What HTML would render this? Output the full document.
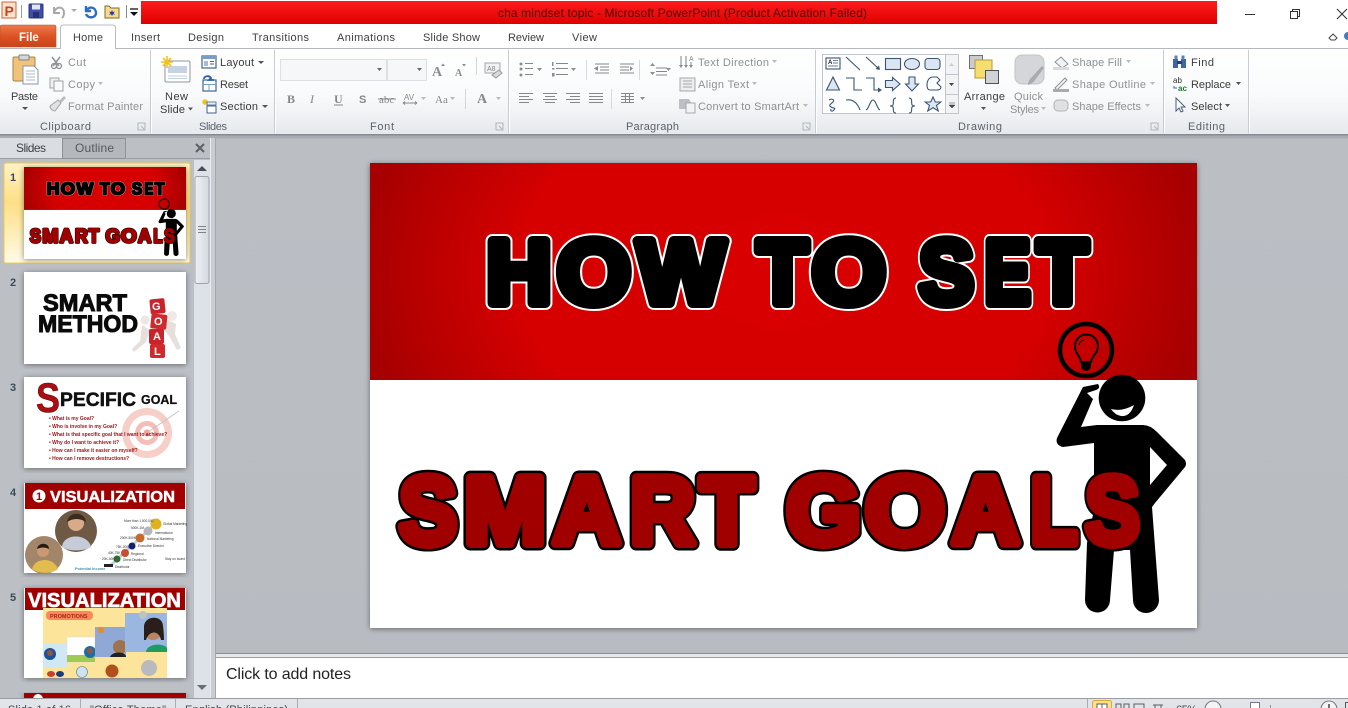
<!DOCTYPE html>
<html lang="en"><head><meta charset="utf-8"><title>cha mindset topic - Microsoft PowerPoint</title>
<style>
html,body{margin:0;padding:0;width:1348px;height:708px;overflow:hidden;background:#b9bdc2}
svg{position:absolute;left:0;top:0;display:block}
text{font-family:"Liberation Sans",sans-serif}
.r{font-size:11px;fill:#3c3c3c}
.d{font-size:11px;fill:#8e9094}
.g{font-size:11px;fill:#5d6269}
.tab{font-size:11px;fill:#3f4042}
.ic{fill:none;stroke:#3a5472;stroke-width:1.1}
.sf{fill:#dbe6f2;stroke:#3a5472;stroke-width:1.1}
.b{font-weight:bold}
.h1 text{font-family:"Liberation Sans",sans-serif;font-weight:bold;font-size:90px;stroke-linejoin:round}
.h2 text{font-family:"Liberation Sans",sans-serif;font-weight:bold;font-size:96px;stroke-linejoin:round}
.wo text{fill:#fff;stroke:#fff;stroke-width:14px}
.bk text{fill:#000;stroke:#000;stroke-width:10px}
.bo text{fill:#000;stroke:#000;stroke-width:14px}
.rd text{fill:#a00000;stroke:#a00000;stroke-width:9px}
</style></head><body>
<svg width="1348" height="708" viewBox="0 0 1348 708" xmlns="http://www.w3.org/2000/svg">
<defs>
<linearGradient id="red" x1="0" y1="0" x2="0" y2="1"><stop offset="0" stop-color="#ff1c1c"/><stop offset="1" stop-color="#de0000"/></linearGradient>
<linearGradient id="file" x1="0" y1="0" x2="0" y2="1"><stop offset="0" stop-color="#ee7a4c"/><stop offset=".5" stop-color="#dc5425"/><stop offset="1" stop-color="#c9431a"/></linearGradient>
<linearGradient id="rib" x1="0" y1="0" x2="0" y2="1"><stop offset="0" stop-color="#ffffff"/><stop offset=".55" stop-color="#f9fafb"/><stop offset="1" stop-color="#e6e9ed"/></linearGradient>
<linearGradient id="sel" x1="0" y1="0" x2="0" y2="1"><stop offset="0" stop-color="#fff3c4"/><stop offset=".4" stop-color="#fddf86"/><stop offset="1" stop-color="#fffbe8"/></linearGradient>
<linearGradient id="sb" x1="0" y1="0" x2="1" y2="0"><stop offset="0" stop-color="#eef0f3"/><stop offset="1" stop-color="#d4d9e0"/></linearGradient>
<linearGradient id="main" x1="0" y1="0" x2="0" y2="1"><stop offset="0" stop-color="#bcc0c5"/><stop offset="1" stop-color="#b8bcc1"/></linearGradient>
<radialGradient id="slidered" gradientUnits="userSpaceOnUse" cx="783" cy="272" r="425" gradientTransform="translate(0 81.6) scale(1 .7)"><stop offset="0" stop-color="#d80000"/><stop offset=".62" stop-color="#d60000"/><stop offset="1" stop-color="#a60000"/></radialGradient>
<filter id="sh" x="-5%" y="-5%" width="110%" height="110%"><feDropShadow dx="0" dy="1" stdDeviation="3" flood-color="#000" flood-opacity=".45"/></filter>
</defs>

<!-- workspace -->
<rect width="1348" height="708" fill="url(#main)"/>

<!-- title bar -->
<rect x="0" y="0" width="1348" height="49" fill="#fff"/>
<rect x="2" y="2" width="14" height="16" fill="#fbe3d0" stroke="#d2622f"/>
<text x="4.500" y="16" font-size="14" font-weight="bold" fill="#c8431a">P</text>
<path d="M21.500 5V18" stroke="#9a9a9a"/>
<rect x="29" y="4" width="14" height="14" rx="1" fill="#3f4fae" stroke="#2b3577"/><rect x="32" y="4.500" width="8" height="5" fill="#dfe6f4"/><rect x="33" y="12" width="6" height="6" fill="#2a2f70"/>
<path d="M54 7v6h6M54 12c2-6 10-6 10 1 0 2-1 4-2 5" fill="none" stroke="#a8a8a8" stroke-width="2"/>
<path d="M71 9l3 3 3-3z" fill="#aaa"/>
<path d="M86 6v5h5M87 10c2-4 9-3 9 3 0 5-8 6-10 1" fill="none" stroke="#2d6cc0" stroke-width="2.400"/>
<path d="M105 6h4l2 2h8v10h-14z" fill="#f6dc87" stroke="#7d6a30"/><path d="M112 10l.8 2 2.200-.5-1.500 1.600 1.500 1.700-2.200-.5-.8 2-.8-2-2.200.5 1.500-1.700-1.500-1.600 2.200.5z" fill="#2238a8"/>
<path d="M126.500 5V18" stroke="#8a8a8a"/>
<path d="M130 9h8" stroke="#111" stroke-width="1.300"/><path d="M130 12h8l-4 4z" fill="#111"/>
<rect x="141" y="1" width="1076" height="23" fill="url(#red)"/>
<text x="498" y="17" font-size="12" fill="#500808" textLength="369" lengthAdjust="spacing">cha mindset topic - Microsoft PowerPoint (Product Activation Failed)</text>
<path d="M1245 14.500h10" stroke="#333"/>
<path d="M1290.500 11.500h7v7h-7zM1292.500 11.500v-2h7v7h-2" fill="none" stroke="#333"/>
<path d="M1337 9l10 10M1347 9l-10 10" stroke="#333" stroke-width="1.100"/>
<path d="M1329 38l4-4 4 4-2 2h-4z" fill="none" stroke="#444"/>
<circle cx="1348" cy="36" r="4" fill="#3e7cc9"/>

<!-- tabs -->
<path d="M0 47V27q0-2 2-2h52q2 0 2 2v20z" fill="url(#file)" stroke="#b4532b" stroke-width=".6"/>
<text x="19" y="41" font-size="11.500" font-weight="bold" fill="#fff">File</text>
<rect x="0" y="48" width="1348" height="1" fill="#b5b9be"/>
<path d="M60.500 49V28q0-3 3-3h49q3 0 3 3v21" fill="#fff" stroke="#b8bcc2"/>
<rect x="61" y="48" width="54" height="2" fill="#fff"/>
<text class="tab" x="73" y="41" textLength="30">Home</text>
<text class="tab" x="131" y="41" textLength="29">Insert</text>
<text class="tab" x="188" y="41" textLength="36">Design</text>
<text class="tab" x="252" y="41" textLength="57">Transitions</text>
<text class="tab" x="337" y="41" textLength="58">Animations</text>
<text class="tab" x="423" y="41" textLength="57">Slide Show</text>
<text class="tab" x="508" y="41" textLength="36">Review</text>
<text class="tab" x="572" y="41" textLength="25">View</text>

<!-- ribbon -->
<rect x="0" y="49" width="1348" height="85" fill="url(#rib)"/>
<rect x="0" y="134" width="1348" height="1.500" fill="#888c92"/>
<rect x="0" y="135.500" width="1348" height="3" fill="#a9adb3"/>
<g stroke="#c8ccd2">
<path d="M150.500 50V133M274.500 50V133M508.500 50V133M815.500 50V133M1163.500 50V133M1248.500 50V133"/>
</g>
<g stroke="#fff"><path d="M151.500 50V133M275.500 50V133M509.500 50V133M816.500 50V133M1164.500 50V133M1249.500 50V133"/></g>
<text class="g" x="40" y="130" textLength="51">Clipboard</text>
<text class="g" x="199" y="130" textLength="28">Slides</text>
<text class="g" x="370" y="130" textLength="24">Font</text>
<text class="g" x="626" y="130" textLength="53">Paragraph</text>
<text class="g" x="958" y="130" textLength="44">Drawing</text>
<text class="g" x="1188" y="130" textLength="37">Editing</text>
<g fill="none" stroke="#a2a5aa" stroke-width=".8"><path d="M138 123h7v7h-7zM141 126l3 3"/><path d="M496 123h7v7h-7zM499 126l3 3"/><path d="M803 123h7v7h-7zM806 126l3 3"/><path d="M1151 123h7v7h-7zM1154 126l3 3"/></g>

<!-- clipboard -->
<rect x="13" y="57" width="22" height="24" rx="1.500" fill="#f0c27a" stroke="#a68348"/>
<rect x="19" y="55" width="10" height="5" rx="1" fill="#d3d7dc" stroke="#7f7f7f"/>
<path d="M23 66h11l4 4v14H23z" fill="#fff" stroke="#8a95a5"/>
<path d="M26 71h9M26 74h9M26 77h9M26 80h9" stroke="#b0b8c5"/>
<text class="r" x="11" y="100" textLength="27">Paste</text>
<path d="M22 107h6l-3 3z" fill="#555"/>
<path d="M52 57l7 9M60 57l-7 9" stroke="#8d9095" stroke-width="1.500"/><circle cx="54" cy="66" r="2.500" fill="none" stroke="#8d9095" stroke-width="1.300"/><circle cx="59" cy="66" r="2.500" fill="none" stroke="#8d9095" stroke-width="1.300"/>
<text class="d" x="68" y="66" textLength="18">Cut</text>
<rect x="50" y="78" width="9" height="10" fill="#eef0f2" stroke="#a0a3a8"/><rect x="54" y="81" width="9" height="10" fill="#fafafa" stroke="#a0a3a8"/>
<text class="d" x="68" y="88" textLength="27">Copy</text><path d="M98 82h5l-2.500 3z" fill="#bbb"/>
<path d="M50 106l8-6 3 3-6 8c-2 0-5-2-5-5z" fill="#dfe1e4" stroke="#a0a3a8"/><path d="M59 101l5-5 2 2-5 5z" fill="#b9bcc0"/>
<text class="d" x="68" y="110" textLength="75">Format Painter</text>

<!-- slides -->
<rect x="165" y="61" width="25" height="21" rx="1.500" fill="#fff" stroke="#8c96a3"/>
<rect x="168" y="66" width="19" height="7" fill="#c7d2e3"/><path d="M168 76h19M168 78.500h19" stroke="#c6cfdc"/>
<path d="M167 56v12M161 62h12M163 58l8 8M171 58l-8 8" stroke="#f2c11b" stroke-width="1.600"/>
<text class="r" x="165" y="100" textLength="23">New</text>
<text class="r" x="160" y="113" textLength="25">Slide</text><path d="M188 107.500h5l-2.500 3z" fill="#555"/>
<rect x="202" y="56" width="14" height="12" fill="#fff" stroke="#3f6394" stroke-width="1.200"/><rect x="202" y="56" width="14" height="3" fill="#7b9ec8"/><rect x="204" y="61" width="4" height="5" fill="#a8bcd6"/><path d="M210 61.500h4M210 64h4" stroke="#3f6394"/>
<text class="r" x="220" y="66" textLength="34">Layout</text><path d="M258 61h6l-3 3z" fill="#555"/>
<rect x="203" y="80" width="13" height="11" fill="#fff" stroke="#3f6394" stroke-width="1.200"/><path d="M203 84.500h13M209 84.500V91" stroke="#7b9ec8"/><path d="M204 79c0-3 5-4 7-1l-2 2h5" fill="none" stroke="#2a5ea8" stroke-width="1.800"/>
<text class="r" x="220" y="88" textLength="28">Reset</text>
<path d="M205 99v6M202 102h6M203 100l4 4M207 100l-4 4" stroke="#f2c11b" stroke-width="1.400"/><rect x="207" y="102" width="9" height="3" fill="#e9edf3" stroke="#3f6394" stroke-width=".8"/><rect x="207" y="106" width="9" height="7" fill="#fff" stroke="#3f6394" stroke-width="1"/>
<text class="r" x="220" y="110" textLength="38">Section</text><path d="M262 105h6l-3 3z" fill="#555"/>

<!-- font -->
<rect x="280.500" y="59.500" width="106" height="21" fill="#f6f7f9" stroke="#dcdfe4"/>
<rect x="387.500" y="59.500" width="39" height="21" fill="#f6f7f9" stroke="#dcdfe4"/>
<path d="M377 68h5l-2.500 3zM417 68h5l-2.500 3z" fill="#666"/>
<text x="432" y="76" font-size="14" font-weight="bold" fill="#8a8d91" style="font-family:'Liberation Serif',serif">A</text><path d="M441 66l2-2.500 2 2.500z" fill="#8a8d91"/>
<text x="455" y="76" font-size="10" font-weight="bold" fill="#8a8d91" style="font-family:'Liberation Serif',serif">A</text><path d="M462 64l2 2.500 2-2.500z" fill="#8a8d91"/>
<path d="M476.500 57v18" stroke="#d2d5da"/>
<rect x="485" y="63" width="15" height="10" fill="#f0f1f3" stroke="#a5a8ad"/><text x="487" y="71" font-size="7" fill="#888">A8</text><path d="M492 75l7-5 3 3-6 5z" fill="#d8dadd" stroke="#999"/>
<text x="287" y="103" font-size="12" font-weight="bold" fill="#85878b" style="font-family:'Liberation Serif',serif">B</text>
<text x="310" y="103" font-size="12" font-style="italic" fill="#85878b" style="font-family:'Liberation Serif',serif">I</text>
<text x="334" y="103" font-size="12" font-weight="bold" fill="#85878b" style="font-family:'Liberation Serif',serif">U</text><path d="M334 105h9" stroke="#85878b"/>
<text x="359" y="103" font-size="11" font-weight="bold" fill="#85878b">S</text>
<text x="379" y="103" font-size="11" fill="#85878b" style="font-family:'Liberation Serif',serif">abc</text><path d="M378 99h18" stroke="#85878b"/>
<text x="404" y="100" font-size="8" fill="#85878b">AV</text><path d="M403 103h14M403 103l2-1.500M403 103l2 1.500M417 103l-2-1.500M417 103l-2 1.500" stroke="#85878b" fill="none"/><path d="M421 97h5l-2.500 3z" fill="#bbb"/>
<text x="435" y="103" font-size="11" fill="#85878b" style="font-family:'Liberation Serif',serif">Aa</text><path d="M450 97h5l-2.500 3z" fill="#bbb"/>
<path d="M465.500 89v20" stroke="#d2d5da"/>
<text x="477" y="103" font-size="14" font-weight="bold" fill="#85878b" style="font-family:'Liberation Serif',serif">A</text><path d="M496 97h5l-2.500 3z" fill="#bbb"/>

<!-- paragraph -->
<g stroke="#85878b" fill="none">
<path d="M525 63.500h8M525 68.500h8M525 74.500h8M556 63.500h12M556 68.500h12M556 74.500h12"/>
<path d="M595 64h14M600 67h9M600 70h9M595 73h14M620 64h14M620 67h9M620 70h9M620 73h14"/>
<path d="M656 68h11M656 71.500h11M656 75h11"/>
<path d="M519 93.500h14M519 96.500h10M519 99.500h14M519 102.500h10M543 93.500h14M545 96.500h10M543 99.500h14M545 102.500h10M566 93.500h14M570 96.500h10M566 99.500h14M570 102.500h10M589 93.500h14M589 96.500h14M589 99.500h14M589 102.500h14"/>
<path d="M621 93.500h13M621 96.500h13M621 99.500h13M621 102.500h13M625.500 93v10M629.500 93v10"/>
</g>
<g fill="#8a8c90"><circle cx="521" cy="64" r="1.500"/><circle cx="521" cy="69" r="1.500"/><circle cx="521" cy="75" r="1.500"/>
<path d="M552 62h1.500v4h-1.500zM552 68h2.500v1.500h-2.500zM552 73h2.500v3.500h-2.500z"/>
<path d="M537 68h5l-2.500 3zM571 68h5l-2.500 3z"/>
<path d="M594 68.500l4-2.500v5zM633 68.500l-3-2.500v5zM650 66l2.500-3 2.500 3zM650 72l2.500 3 2.500-3z"/>
<path d="M666 68h5l-2.500 3zM640 97h5l-2.500 3z"/></g>
<path d="M586.500 60v20M639.500 60v20M611.500 89v20" stroke="#d6d9dd"/>
<path d="M681 56v11M686 56v11M691 62v5" stroke="#7f8285"/><text x="689" y="61" font-size="7" fill="#8a8c90">A</text><path d="M679 65l2 3 2-3M684 65l2 3 2-3M689 65l2 3 2-3" fill="#8a8c90"/>
<text class="d" x="698" y="66" textLength="71">Text Direction</text><path d="M772 60h5l-2.500 3z" fill="#bbb"/>
<rect x="680" y="78" width="15" height="13" fill="#eceef0" stroke="#a5a8ad"/><path d="M683 81h9M683 84h9M683 87h9" stroke="#a5a8ad"/>
<text class="d" x="698" y="88" textLength="51">Align Text</text><path d="M752 82h5l-2.500 3z" fill="#bbb"/>
<path d="M679 99h10l3 5-3 5h-10z" fill="#bcbfc4"/><rect x="686" y="103" width="9" height="10" fill="#f2f3f5" stroke="#a5a8ad"/>
<text class="d" x="698" y="110" textLength="101">Convert to SmartArt</text><path d="M803 104h5l-2.500 3z" fill="#bbb"/>

<!-- shapes -->
<rect x="822.500" y="54.500" width="123" height="59" fill="#fff" stroke="#c2c6cc"/>
<rect x="945.500" y="54.500" width="13" height="59" fill="#f1f3f5" stroke="#c2c6cc"/>
<path d="M945.500 74.500h13M945.500 94.500h13" stroke="#c2c6cc"/>
<path d="M949 66l2.500-3 2.500 3z" fill="#ccc"/><path d="M949 83h5l-2.500 3z" fill="#444"/><path d="M949 103h6M949 105h6l-3 3z" fill="#444" stroke="#444" stroke-width=".5"/>
<g>
<rect x="826" y="58" width="14" height="11" class="sf" style="fill:#fff"/><text x="828" y="64" font-size="6" font-weight="bold" fill="#223">A</text><path d="M833 60.500h5M833 63h5M828 66h10" stroke="#3a5472" stroke-width=".8"/>
<path class="ic" d="M846 57l14 13"/>
<path class="ic" d="M866 57l13 12"/><path d="M880 70l-4.500-1 3.500-3.500z" fill="#3a5472"/>
<rect x="885.500" y="58.500" width="15" height="11" class="sf"/>
<ellipse cx="912" cy="64" rx="7.500" ry="5.500" class="sf"/>
<rect x="925" y="58.500" width="15" height="11" rx="3" class="sf"/>
<path class="sf" d="M833 77l-6.500 13h13z"/>
<path class="ic" d="M846 78h8v12h8"/>
<path class="ic" d="M866 78h8v12h6"/><path d="M882 90l-4-2.500v5z" fill="#3a5472"/>
<path class="sf" d="M885.500 80.500h7v-3l7.500 6.500-7.500 6.500v-3h-7z"/>
<path class="sf" d="M909 77h6v7h3.500l-6.500 7-6.500-7h3.500z"/>
<path class="sf" style="fill:#fff" d="M927 85c0-4 2-8 6-8h4l3 3-3 3 4 4c0 2-2 3-4 3h-7c-2 0-3-2-3-5z"/>
<path class="ic" d="M829 100c3-2 6 0 4 2s-5 3-2 5 5 0 3 3c-2 2-4 1-3-1"/>
<path class="ic" d="M846 100c6-1 11 2 14 10"/>
<path class="ic" d="M866 110c3-1 4-10 7-10s4 9 7 10"/>
<path class="ic" d="M896 98c-4 0-2 5-3 7-1 1-2 1-3 1 1 0 2 0 3 1 1 2-1 6 3 6"/>
<path class="ic" d="M909 98c4 0 2 5 3 7 1 1 2 1 3 1-1 0-2 0-3 1-1 2 1 6-3 6"/>
<path class="sf" d="M933 97l2.300 5h5.500l-4.300 3.500 1.800 5.500-5.300-3.300-5.300 3.300 1.800-5.500-4.300-3.500h5.500z"/>
</g>

<!-- drawing right -->
<rect x="969.500" y="55.500" width="13" height="13" fill="#c9ccd1" stroke="#6e7074"/>
<rect x="975" y="60" width="17" height="18" fill="#f6dd6f" stroke="#b49b3a"/>
<rect x="985.500" y="70.500" width="13" height="13" fill="#cfd2d6" stroke="#4e5054"/>
<text class="r" x="964" y="100" textLength="41">Arrange</text><path d="M981 107h5l-2.500 3z" fill="#555"/>
<rect x="1015" y="55" width="29" height="29" rx="7" fill="#d4d6d9" stroke="#c2c4c8"/>
<path d="M1044 68l-9 12c-2 3-4 4-7 5 0-3 1-5 3-7l11-12z" fill="#a9abaf"/>
<text class="d" x="1014" y="100" textLength="29">Quick</text>
<text class="d" x="1010" y="113" textLength="29">Styles</text><path d="M1041 107h5l-2.500 3z" fill="#bbb"/>
<path d="M1055 62l6-5 7 7-6 4z" fill="#f2f3f4" stroke="#8d9095"/><rect x="1053" y="67" width="16" height="3" fill="#d8dade"/>
<text class="d" x="1072" y="66" textLength="50">Shape Fill</text><path d="M1126 60h5l-2.500 3z" fill="#bbb"/>
<path d="M1055 88l10-10 2 2-10 10z" fill="#f4f5f6" stroke="#8d9095"/><rect x="1053" y="89" width="16" height="3" fill="#a9abaf"/>
<text class="d" x="1072" y="88" textLength="74">Shape Outline</text><path d="M1150 82h5l-2.500 3z" fill="#bbb"/>
<rect x="1054" y="100" width="14" height="11" rx="4" fill="#dfe0e3" stroke="#b2b4b8"/>
<text class="d" x="1072" y="110" textLength="69">Shape Effects</text><path d="M1145 104h5l-2.500 3z" fill="#bbb"/>

<!-- editing -->
<rect x="1173" y="59" width="5" height="9" fill="#3e65a8"/><rect x="1181" y="59" width="5" height="9" fill="#3e65a8"/><rect x="1177" y="61" width="5" height="3" fill="#243f72"/><rect x="1174.500" y="55.500" width="3" height="4" fill="#5b80be"/><rect x="1181.500" y="55.500" width="3" height="4" fill="#5b80be"/>
<text class="r" x="1191" y="66" textLength="23">Find</text>
<text x="1173" y="83" font-size="8" fill="#333">ab</text><text x="1178" y="91" font-size="8" font-weight="bold" fill="#1c7a2e">ac</text><path d="M1174 86v2h3" fill="none" stroke="#3e65a8"/>
<text class="r" x="1191" y="88" textLength="40">Replace</text><path d="M1236 82h5l-2.500 3z" fill="#555"/>
<path d="M1176 98v13l3-3 2 4 2-1-2-4h4z" fill="#fff" stroke="#4a5e80"/>
<text class="r" x="1191" y="110" textLength="31">Select</text><path d="M1225 104h5l-2.500 3z" fill="#555"/>

<!-- left panel -->
<rect x="0" y="138" width="210" height="560" fill="#bcc0c5"/>
<rect x="0" y="138" width="62" height="21" fill="#dadde1"/>
<text x="16" y="152" font-size="12" fill="#404347" textLength="30">Slides</text>
<rect x="62.500" y="138.500" width="63" height="20" fill="#b4b8bd" stroke="#8e9298"/>
<text x="75" y="152" font-size="12" fill="#55585d" textLength="39">Outline</text>
<path d="M0 158.500h62M125 158.500h85" stroke="#9a9ea4"/>
<path d="M196 144l8 8M204 144l-8 8" stroke="#5d6166" stroke-width="2"/>
<rect x="210" y="138" width="1" height="560" fill="#e9ebee"/>
<rect x="211" y="138" width="4" height="560" fill="#c9cdd2"/>
<rect x="215" y="138" width="1" height="560" fill="#a4a8ae"/>
<rect x="194" y="160" width="16" height="538" fill="#dde2e9"/>
<path d="M197 171l5-5 5 5z" fill="#4a4d52"/>
<rect x="195" y="176.500" width="14" height="107" rx="2" fill="url(#sb)" stroke="#9ea3aa"/>
<path d="M198 226.500h8M198 229.500h8M198 232.500h8" stroke="#7f8388"/>
<path d="M197 685l5 5 5-5z" fill="#6a6d72"/>

<rect x="4" y="163" width="186" height="100" rx="2" fill="url(#sel)" stroke="#f2c94c"/>
<g font-size="11" font-weight="bold" fill="#3e4a5a">
<text x="10" y="181">1</text><text x="10" y="286">2</text><text x="10" y="391">3</text><text x="10" y="496">4</text><text x="10" y="601">5</text>
</g>

<!-- thumb 1 -->
<rect x="24" y="167" width="162" height="92" fill="#fff" filter="url(#sh)"/>
<svg x="24" y="167" width="162" height="92" viewBox="370 163 827 465" preserveAspectRatio="none">
<rect x="370" y="163" width="827" height="217" fill="url(#slidered)"/>
<g class="h1">
<g class="wo"><text x="486.500" y="303" textLength="65" lengthAdjust="spacingAndGlyphs" style="fill:#bbb;stroke:#bbb">H</text><text x="557.300" y="303" textLength="73.300" lengthAdjust="spacingAndGlyphs" style="fill:#bbb;stroke:#bbb">O</text><text x="637.400" y="303" textLength="87.300" lengthAdjust="spacingAndGlyphs" style="fill:#bbb;stroke:#bbb">W</text><text x="757.200" y="303" textLength="50.500" lengthAdjust="spacingAndGlyphs" style="fill:#bbb;stroke:#bbb">T</text><text x="812.300" y="303" textLength="73.300" lengthAdjust="spacingAndGlyphs" style="fill:#bbb;stroke:#bbb">O</text><text x="919.300" y="303" textLength="54.400" lengthAdjust="spacingAndGlyphs" style="fill:#bbb;stroke:#bbb">S</text><text x="984.600" y="303" textLength="45.900" lengthAdjust="spacingAndGlyphs" style="fill:#bbb;stroke:#bbb">E</text><text x="1037.200" y="303" textLength="50.500" lengthAdjust="spacingAndGlyphs" style="fill:#bbb;stroke:#bbb">T</text></g>
<g class="bk"><text x="486.500" y="303" textLength="65" lengthAdjust="spacingAndGlyphs">H</text><text x="557.300" y="303" textLength="73.300" lengthAdjust="spacingAndGlyphs">O</text><text x="637.400" y="303" textLength="87.300" lengthAdjust="spacingAndGlyphs">W</text><text x="757.200" y="303" textLength="50.500" lengthAdjust="spacingAndGlyphs">T</text><text x="812.300" y="303" textLength="73.300" lengthAdjust="spacingAndGlyphs">O</text><text x="919.300" y="303" textLength="54.400" lengthAdjust="spacingAndGlyphs">S</text><text x="984.600" y="303" textLength="45.900" lengthAdjust="spacingAndGlyphs">E</text><text x="1037.200" y="303" textLength="50.500" lengthAdjust="spacingAndGlyphs">T</text></g>
</g>
<path d="M1083 387L1098 384Q1101 388 1096 390L1087 393L1093 399L1081 427L1097 425H1143Q1150 425 1157 432L1185 460Q1187 464 1185 467L1155 503L1152 507L1159 600A13 13 0 0 1 1133 600L1130 550H1114L1110 600A12.500 12.500 0 0 1 1085 600L1087 543L1094 510V443L1063 447Q1055 445 1057 438ZM1150 447V485L1167 465Z" fill-rule="evenodd"/>
<circle cx="1122" cy="398" r="23.300"/><circle cx="1086" cy="350" r="26" fill="none" stroke="#000" stroke-width="5"/>
<g class="h2">
<g class="bo"><text x="399.100" y="543.500" textLength="57.800" lengthAdjust="spacingAndGlyphs">S</text><text x="464" y="543.500" textLength="82" lengthAdjust="spacingAndGlyphs">M</text><text x="552.700" y="543.500" textLength="67.700" lengthAdjust="spacingAndGlyphs">A</text><text x="630.100" y="543.500" textLength="64.800" lengthAdjust="spacingAndGlyphs">R</text><text x="700.100" y="543.500" textLength="53.800" lengthAdjust="spacingAndGlyphs">T</text><text x="786.300" y="543.500" textLength="74.400" lengthAdjust="spacingAndGlyphs">G</text><text x="865" y="543.500" textLength="80" lengthAdjust="spacingAndGlyphs">O</text><text x="951.700" y="543.500" textLength="67.700" lengthAdjust="spacingAndGlyphs">A</text><text x="1030.500" y="543.500" textLength="47" lengthAdjust="spacingAndGlyphs">L</text><text x="1085.300" y="543.500" textLength="54.400" lengthAdjust="spacingAndGlyphs">S</text></g>
<g class="rd"><text x="399.100" y="543.500" textLength="57.800" lengthAdjust="spacingAndGlyphs">S</text><text x="464" y="543.500" textLength="82" lengthAdjust="spacingAndGlyphs">M</text><text x="552.700" y="543.500" textLength="67.700" lengthAdjust="spacingAndGlyphs">A</text><text x="630.100" y="543.500" textLength="64.800" lengthAdjust="spacingAndGlyphs">R</text><text x="700.100" y="543.500" textLength="53.800" lengthAdjust="spacingAndGlyphs">T</text><text x="786.300" y="543.500" textLength="74.400" lengthAdjust="spacingAndGlyphs">G</text><text x="865" y="543.500" textLength="80" lengthAdjust="spacingAndGlyphs">O</text><text x="951.700" y="543.500" textLength="67.700" lengthAdjust="spacingAndGlyphs">A</text><text x="1030.500" y="543.500" textLength="47" lengthAdjust="spacingAndGlyphs">L</text><text x="1085.300" y="543.500" textLength="54.400" lengthAdjust="spacingAndGlyphs">S</text></g>
</g>
</svg>

<!-- thumb 2 -->
<rect x="24" y="272" width="162" height="92" fill="#fff" filter="url(#sh)"/>
<g font-weight="bold" fill="#0a0a0a" stroke="#0a0a0a" stroke-width="1">
<text x="43" y="311" font-size="24" textLength="84" lengthAdjust="spacingAndGlyphs">SMART</text>
<text x="38" y="332" font-size="24" textLength="100" lengthAdjust="spacingAndGlyphs">METHOD</text></g>
<g>
<circle cx="172" cy="316" r="5" fill="#efe9e6"/><path d="M168 320l-4 10 5 6 8 14 4-2-6-14 1-10z" fill="#e6e0dd"/>
<circle cx="145" cy="320" r="4.500" fill="#ece7e4"/><path d="M142 325l8 5-4 12-12 10-2-3 8-8z" fill="#e6e0dd"/>
<rect x="150" y="299" width="15" height="15" rx="2" fill="#c9242b" transform="rotate(-6 155 306)"/><rect x="151" y="314" width="16" height="15" rx="2" fill="#d02a2f" transform="rotate(6 158 320)"/><rect x="149" y="329" width="15" height="15" rx="2" fill="#c9242b"/><rect x="150" y="344" width="15" height="14" rx="2" fill="#d02a2f"/>
<g font-size="11" font-weight="bold" fill="#fff"><text x="152" y="310">G</text><text x="154" y="325">O</text><text x="153" y="340">A</text><text x="154" y="355">L</text></g>
</g>

<!-- thumb 3 -->
<rect x="24" y="377" width="162" height="91" fill="#fff" filter="url(#sh)"/>
<circle cx="147" cy="433" r="25" fill="#f6cfc9"/><circle cx="147" cy="433" r="18" fill="#fff"/><circle cx="147" cy="433" r="12" fill="#f4bdb5"/><circle cx="147" cy="433" r="7" fill="#fff"/><circle cx="147" cy="433" r="3.500" fill="#efa69c"/>
<path d="M148 432l31-21" stroke="#c9c4c4"/>
<text x="36" y="412" font-size="42" font-weight="bold" fill="#a80e12" stroke="#6d0508" stroke-width=".6" textLength="24" lengthAdjust="spacingAndGlyphs">S</text>
<text x="60" y="406" font-size="19" font-weight="bold" fill="#111" stroke="#111" stroke-width=".5" textLength="76" lengthAdjust="spacingAndGlyphs">PECIFIC</text>
<text x="141" y="404" font-size="13" font-weight="bold" fill="#111" stroke="#111" stroke-width=".3" textLength="36" lengthAdjust="spacingAndGlyphs">GOAL</text>
<g font-size="5" font-weight="bold" fill="#a81419">
<text x="49" y="420">•  What is my Goal?</text>
<text x="49" y="428">•  Who is involve in my Goal?</text>
<text x="49" y="436">•  What is that specific goal that I want to achieve?</text>
<text x="49" y="444">•  Why do I want to achieve it?</text>
<text x="49" y="452">•  How can I make it easier on myself?</text>
<text x="49" y="460">•  How can I remove destructions?</text>
</g>

<!-- thumb 4 -->
<rect x="24" y="483" width="162" height="90" fill="#fff" filter="url(#sh)"/>
<rect x="25" y="483" width="160" height="26" fill="#a00000"/>
<circle cx="39" cy="496" r="6.500" fill="#fff"/><text x="36" y="500" font-size="11" font-weight="bold" fill="#a00000">1</text>
<text x="50" y="502" font-size="16" font-weight="bold" fill="#fff" stroke="#fff" stroke-width=".5" textLength="125" lengthAdjust="spacingAndGlyphs">VISUALIZATION</text>
<circle cx="76" cy="531" r="21" fill="#6e5a44"/><path d="M62 547c1-14 26-14 29 0-6 4-22 5-29 0z" fill="#c5cbd8"/><circle cx="76" cy="523" r="8" fill="#d9aa87"/><path d="M67 522c1-11 18-11 19 0-6-4-13-4-19 0z" fill="#3a2a20"/>
<circle cx="44" cy="555" r="19" fill="#a38669"/><path d="M32 569c3-12 22-12 26 0-6 5-20 5-26 0z" fill="#e2bd4d"/><circle cx="43" cy="551" r="6" fill="#c99a72"/><path d="M37 549c1-7 12-7 12 0-4-2-8-2-12 0z" fill="#241b15"/>
<path d="M110 566l45-42" stroke="#b7d5e3" stroke-width="3"/>
<circle cx="156" cy="524" r="5.500" fill="#e0b020"/><circle cx="148" cy="531" r="4.500" fill="#b5b7ba"/><circle cx="140" cy="538" r="4.500" fill="#c56a2a"/><circle cx="132" cy="546" r="3.500" fill="#14206c"/><circle cx="125" cy="553" r="4" fill="#c7512c"/><circle cx="117" cy="559" r="3.500" fill="#2f6a30"/><rect x="104" y="564" width="9" height="3" fill="#222"/>
<g font-size="3.200" fill="#333"><text x="124" y="522">More than 1,000,000</text><text x="163" y="525">Global Marketing</text><text x="131" y="529">500K-1M</text><text x="155" y="534">International</text><text x="120" y="539">200K-500K</text><text x="147" y="540">National Marketing</text><text x="116" y="548">75K-200K</text><text x="138" y="547">Executive Director</text><text x="108" y="554">40K-75K</text><text x="131" y="555">Regional</text><text x="102" y="560">20K-40K</text><text x="123" y="561">Direct Distributor</text><text x="115" y="568">Distributor</text><text x="165" y="560">Stay on board</text></g>
<text x="75" y="570" font-size="3.800" font-weight="bold" fill="#3b94b8">Potential Income</text>

<!-- thumb 5 -->
<rect x="24" y="588" width="162" height="90" fill="#fff" filter="url(#sh)"/>
<rect x="25" y="588" width="160" height="22" fill="#a00000"/>
<text x="28" y="607" font-size="20" font-weight="bold" fill="#fff" stroke="#fff" stroke-width=".7" textLength="153" lengthAdjust="spacingAndGlyphs">VISUALIZATION</text>
<rect x="43" y="608" width="124" height="70" fill="#fce49b"/>
<rect x="46" y="611" width="47" height="9" rx="4" fill="#f58a5a"/><text x="50" y="618" font-size="5.500" font-weight="bold" fill="#b02418">PROMOTIONS</text>
<rect x="43" y="643" width="24" height="24" fill="#cfe8f4"/><circle cx="50" cy="654" r="6" fill="#1f4f96"/><circle cx="50" cy="653" r="3" fill="#8a5a3e"/>
<rect x="67" y="637" width="28" height="25" fill="#fff" stroke="#ddd" stroke-width=".5"/><rect x="67" y="655" width="28" height="7" fill="#9ecb55"/><circle cx="90" cy="652" r="6" fill="#1f6aa8"/><circle cx="90" cy="651" r="3" fill="#8a5a3e"/>
<rect x="95" y="627" width="31" height="30" fill="#8fa8d6"/><circle cx="120" cy="647" r="7" fill="#a0734f"/><path d="M110 657c2-6 16-6 16 0z" fill="#222"/><circle cx="101" cy="630" r="3" fill="#e58b2a"/>
<rect x="125" y="613" width="42" height="39" fill="#9ab7e2"/><circle cx="153" cy="631" r="9" fill="#b88560"/><path d="M144 626c1-11 19-11 19 0 1 7 1 14 1 14h-3c-2-10-12-10-15 0h-2z" fill="#2a1e1a"/><path d="M146 652c1-9 18-9 21-4v4z" fill="#1f9c62"/><circle cx="143" cy="615" r="4" fill="#bfc2c5"/>
<circle cx="82" cy="672" r="5.500" fill="#cfe3ee" stroke="#4a86a8" stroke-width=".6"/><circle cx="112" cy="671" r="6.500" fill="#b1501a"/><circle cx="149" cy="668" r="8" fill="#b8babd"/><ellipse cx="51" cy="674" rx="4" ry="3" fill="#c7412c"/><ellipse cx="60" cy="674" rx="4" ry="3" fill="#1f3a78"/>

<!-- thumb 6 -->
<rect x="24" y="693" width="162" height="5" fill="#a00000" filter="url(#sh)"/><circle cx="38" cy="699" r="5" fill="#fff"/>

<!-- main slide -->
<rect x="370" y="163" width="827" height="465" fill="#fff" filter="url(#sh)"/>
<rect x="370" y="163" width="827" height="217" fill="url(#slidered)"/>
<g class="h1">
<g class="wo"><text x="486.500" y="303" textLength="65" lengthAdjust="spacingAndGlyphs">H</text><text x="557.300" y="303" textLength="73.300" lengthAdjust="spacingAndGlyphs">O</text><text x="637.400" y="303" textLength="87.300" lengthAdjust="spacingAndGlyphs">W</text><text x="757.200" y="303" textLength="50.500" lengthAdjust="spacingAndGlyphs">T</text><text x="812.300" y="303" textLength="73.300" lengthAdjust="spacingAndGlyphs">O</text><text x="919.300" y="303" textLength="54.400" lengthAdjust="spacingAndGlyphs">S</text><text x="984.600" y="303" textLength="45.900" lengthAdjust="spacingAndGlyphs">E</text><text x="1037.200" y="303" textLength="50.500" lengthAdjust="spacingAndGlyphs">T</text></g>
<g class="bk"><text x="486.500" y="303" textLength="65" lengthAdjust="spacingAndGlyphs">H</text><text x="557.300" y="303" textLength="73.300" lengthAdjust="spacingAndGlyphs">O</text><text x="637.400" y="303" textLength="87.300" lengthAdjust="spacingAndGlyphs">W</text><text x="757.200" y="303" textLength="50.500" lengthAdjust="spacingAndGlyphs">T</text><text x="812.300" y="303" textLength="73.300" lengthAdjust="spacingAndGlyphs">O</text><text x="919.300" y="303" textLength="54.400" lengthAdjust="spacingAndGlyphs">S</text><text x="984.600" y="303" textLength="45.900" lengthAdjust="spacingAndGlyphs">E</text><text x="1037.200" y="303" textLength="50.500" lengthAdjust="spacingAndGlyphs">T</text></g>
</g>
<!-- figure -->
<path fill="#000" fill-rule="evenodd" d="M1083 387L1098 384Q1101 388 1096 390L1087 393L1093 399L1081 427L1097 425H1143Q1150 425 1157 432L1185 460Q1187 464 1185 467L1155 503L1152 507L1159 600A13 13 0 0 1 1133 600L1130 550H1114L1110 600A12.500 12.500 0 0 1 1085 600L1087 543L1094 510V443L1063 447Q1055 445 1057 438ZM1150 447V485L1167 465Z"/>
<circle cx="1122" cy="398" r="23.300" fill="#000"/>
<path d="M1111 409Q1122 412 1134 405Q1130 417 1121 416Q1115 415 1111 409Z" fill="#fff"/>
<circle cx="1086" cy="350" r="26" fill="none" stroke="#000" stroke-width="4.500"/>
<path d="M1081 362C1080 355 1075 354 1075 346A11.500 11.500 0 0 1 1098 346C1098 354 1092 355 1091 362Z" fill="none" stroke="#000" stroke-width="2"/>
<path d="M1081 362h10v4a4 4 0 0 1-10 0z" fill="#000"/>
<path d="M1079 345a6 6 0 0 1 5-5" fill="none" stroke="#000" stroke-width="1"/>
<g class="h2">
<g class="bo"><text x="399.100" y="543.500" textLength="57.800" lengthAdjust="spacingAndGlyphs">S</text><text x="464" y="543.500" textLength="82" lengthAdjust="spacingAndGlyphs">M</text><text x="552.700" y="543.500" textLength="67.700" lengthAdjust="spacingAndGlyphs">A</text><text x="630.100" y="543.500" textLength="64.800" lengthAdjust="spacingAndGlyphs">R</text><text x="700.100" y="543.500" textLength="53.800" lengthAdjust="spacingAndGlyphs">T</text><text x="786.300" y="543.500" textLength="74.400" lengthAdjust="spacingAndGlyphs">G</text><text x="865" y="543.500" textLength="80" lengthAdjust="spacingAndGlyphs">O</text><text x="951.700" y="543.500" textLength="67.700" lengthAdjust="spacingAndGlyphs">A</text><text x="1030.500" y="543.500" textLength="47" lengthAdjust="spacingAndGlyphs">L</text><text x="1085.300" y="543.500" textLength="54.400" lengthAdjust="spacingAndGlyphs">S</text></g>
<g class="rd"><text x="399.100" y="543.500" textLength="57.800" lengthAdjust="spacingAndGlyphs">S</text><text x="464" y="543.500" textLength="82" lengthAdjust="spacingAndGlyphs">M</text><text x="552.700" y="543.500" textLength="67.700" lengthAdjust="spacingAndGlyphs">A</text><text x="630.100" y="543.500" textLength="64.800" lengthAdjust="spacingAndGlyphs">R</text><text x="700.100" y="543.500" textLength="53.800" lengthAdjust="spacingAndGlyphs">T</text><text x="786.300" y="543.500" textLength="74.400" lengthAdjust="spacingAndGlyphs">G</text><text x="865" y="543.500" textLength="80" lengthAdjust="spacingAndGlyphs">O</text><text x="951.700" y="543.500" textLength="67.700" lengthAdjust="spacingAndGlyphs">A</text><text x="1030.500" y="543.500" textLength="47" lengthAdjust="spacingAndGlyphs">L</text><text x="1085.300" y="543.500" textLength="54.400" lengthAdjust="spacingAndGlyphs">S</text></g>
</g>

<!-- notes -->
<rect x="216" y="653" width="1132" height="1" fill="#8d9197"/>
<rect x="216" y="654" width="1132" height="3" fill="#e6e8eb"/>
<rect x="216" y="657" width="1132" height="1" fill="#9a9ea4"/>
<rect x="216" y="658" width="1132" height="40" fill="#fff"/>
<text x="226" y="679" font-size="16" fill="#222" textLength="125">Click to add notes</text>

<!-- status bar -->
<rect x="0" y="698" width="1348" height="10" fill="#e1e4e8"/>
<rect x="0" y="698" width="1348" height="1" fill="#9a9ea4"/>
<path d="M80.500 699v9M175.500 699v9M297.500 699v9M1087.500 699v9" stroke="#a9adb3"/>
<g font-size="11" fill="#45484d">
<text x="8" y="713" textLength="63">Slide 1 of 16</text>
<text x="90" y="713" textLength="76">"Office Theme"</text>
<text x="185" y="713" textLength="103">English (Philippines)</text>
<text x="1176" y="713" textLength="21">65%</text>
</g>
<rect x="1092.500" y="700.500" width="19" height="12" rx="2" fill="#fde08a" stroke="#d9a93a"/>
<path d="M1097 704h10v8h-10zM1102 704v8" fill="#fff" stroke="#5a5e64"/>
<path d="M1116 704h5v5h-5zM1124 704h5v5h-5z" fill="none" stroke="#5a5e64"/>
<path d="M1134 704h10v5h-10z" fill="none" stroke="#5a5e64"/>
<path d="M1153 705h10M1155 705v4h6v-4" fill="none" stroke="#5a5e64"/>
<circle cx="1213" cy="709" r="8" fill="#f3f4f6" stroke="#777b81"/>
<rect x="1250.500" y="702.500" width="9" height="9" fill="#fff" stroke="#777b81"/>
<path d="M1270.500 705v4" stroke="#8f9399"/>
<circle cx="1329" cy="709" r="8" fill="#f3f4f6" stroke="#777b81"/><path d="M1329 704v5" stroke="#444" stroke-width="1.500"/>
<rect x="1345.500" y="702.500" width="6" height="8" fill="none" stroke="#555"/>
</svg>
</body></html>
